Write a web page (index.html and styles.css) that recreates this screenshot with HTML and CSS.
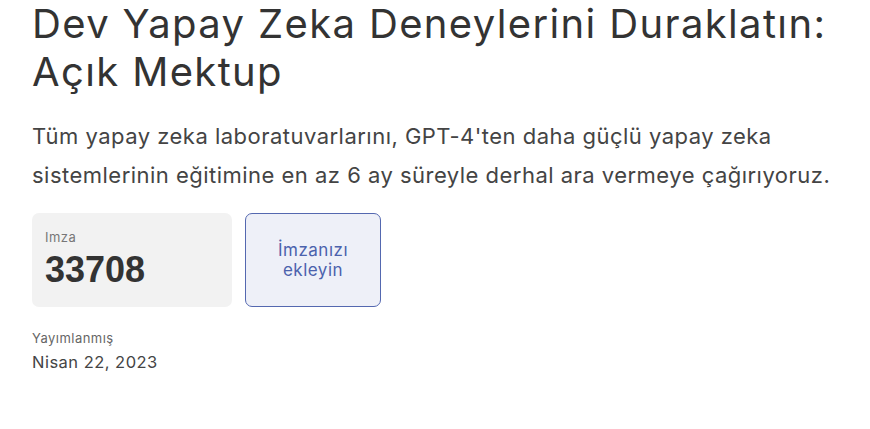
FILE: index.html
```html
<!DOCTYPE html>
<html>
<head>
  <title>Dev Yapay Zeka Deneylerini Duraklatın: Açık Mektup</title>
  <link rel="stylesheet" href="styles.css">
</head>
<body>
  <div class="letter">
    <h1>Dev Yapay Zeka Deneylerini Duraklatın: Açık Mektup</h1>

    <p class="lead">Tüm yapay zeka laboratuvarlarını, GPT-4'ten daha güçlü yapay zeka sistemlerinin eğitimine en az 6 ay süreyle derhal ara vermeye çağırıyoruz.</p>

    <div class="actions">
      <div class="count">
        <span class="count-label">Imza</span>
        <span class="count-value">33708</span>
      </div>
      <button class="sign">İmzanızı ekleyin</button>
    </div>

    <div class="published">
      <span class="published-label">Yayımlanmış</span>
      <span class="published-date">Nisan 22, 2023</span>
    </div>
  </div>
</body>
</html>
```

FILE: styles.css
```css
body {
  margin: 0;
  background-color: #ffffff;
  font-family: Inter, "Noto Sans", sans-serif;
  letter-spacing: 0.03em;
  color: #3a3a3a;
}
.letter {
  padding: 0 32px;
}
h1 {
  margin: 0;
  font-size: 40px;
  line-height: 48px;
  font-weight: 400;
  letter-spacing: 0.034em;
  color: #333333;
}
.lead {
  margin: 21px 0 0;
  font-size: 22px;
  line-height: 39px;
  color: #444444;
}
.actions {
  display: flex;
  gap: 13px;
  margin-top: 18px;
}
.count {
  display: flex;
  flex-direction: column;
  width: 200px;
  height: 94px;
  box-sizing: border-box;
  padding: 16px 13px;
  background-color: #f2f2f2;
  border-radius: 7px;
}
.count-label {
  font-size: 13px;
  color: #777777;
}
.count-value {
  margin-top: 4px;
  font-family: "Liberation Sans", Arial, sans-serif;
  font-size: 36px;
  font-weight: 700;
  letter-spacing: 0;
  color: #333333;
}
.sign {
  width: 136px;
  height: 94px;
  padding: 0 14px;
  background-color: #eef0f8;
  border: 1px solid #5468b0;
  border-radius: 7px;
  font-family: Inter, "Noto Sans", sans-serif;
  font-size: 17px;
  line-height: 20px;
  letter-spacing: 0.03em;
  color: #4b62ad;
  cursor: pointer;
}
.published {
  display: flex;
  flex-direction: column;
  margin-top: 23px;
}
.published-label {
  font-size: 13px;
  color: #666666;
}
.published-date {
  margin-top: 6px;
  font-size: 16.5px;
  color: #444444;
}
```
